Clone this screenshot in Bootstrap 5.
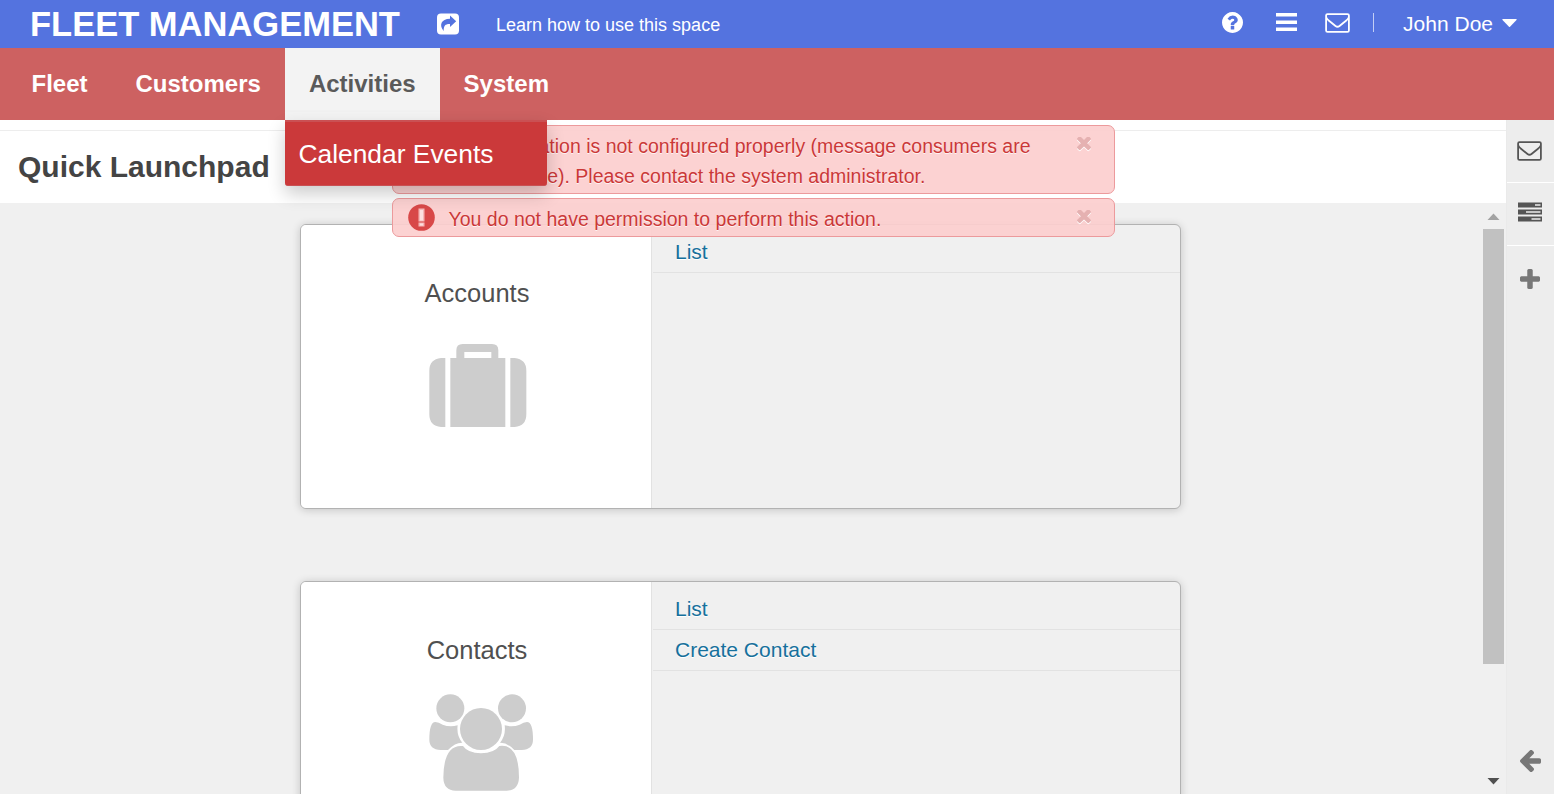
<!DOCTYPE html>
<html lang="en">
<head>
<meta charset="utf-8">
<meta name="viewport" content="width=device-width, initial-scale=1">
<title>Fleet Management</title>
<link rel="stylesheet" href="https://cdn.jsdelivr.net/npm/bootstrap@5.3.0/dist/css/bootstrap.min.css">
<style>
body{font-family:"Liberation Sans",Arial,sans-serif;background:#f0f0f0;color:#444}
svg{display:block;fill:currentColor}
.topbar{height:48px;background:#5473df;padding:0 37px 0 30px}
.brand{font-size:34.5px;line-height:48px;font-weight:700;width:407px}
.learn{font-size:18px;margin-left:37px;padding-top:2px}
.user{font-size:21px;margin-left:29px}
.sep{width:1px;height:19px;margin:-4px 0 0 23px;background:#c3cef5}
.mainmenu{height:72px;background:#cd6161;padding-left:8px}
.mainmenu .nav-link{font-size:24px;font-weight:700;line-height:72px;padding:0 24.5px 0 23.500px;color:#fff}
.mainmenu .nav-link.active{background:linear-gradient(#f3f3f3 62px,#efefef 63px,#f3f3f3 64px);color:#5a5a5a}
.submenu{left:0;top:72px;width:262px;height:66px;z-index:30;background:#cb393a;border-top:2px solid #ca5053;border-bottom:1px solid #c95053;border-radius:0 0 3px 3px;box-shadow:0 8px 18px rgba(0,0,0,.2);color:#fff;font-size:26.4px;line-height:64px;padding-left:13px}
.titlebar{height:83px;background:#fff;padding-top:10px}
.titlebar h1{border-top:1px solid #ededed;font-size:30px;font-weight:700;line-height:71px;padding-left:18px;margin:0;color:#444}
.board{padding:21px 0 0 300px}
.pad-card{width:881px;height:285px;border:1px solid #b2b2b2;border-radius:6px;background:#f0f0f0;box-shadow:0 1px 9px rgba(0,0,0,.19);margin-bottom:72px;flex:none}
.face{width:351px;background:#fff;border-right:1px solid #e2e2e2;color:#505050;font-size:25.5px;line-height:36px;padding:50px 0 0 2px}
.face svg{fill:#cdcdcd;margin:19px 0 0 7px}
.linklist{padding:7px 0 0 1px}
.linklist a{height:41px;line-height:40px;border-bottom:1px solid #e2e2e2;padding-left:22px;font-size:21px;color:#16709c;text-decoration:none;text-shadow:0 1px 0 #fff}
.track{width:24px;padding:10px 0 9px 1px}
.thumb{width:21px;height:435px;margin-top:9px;background:#c1c1c1}
.tools{width:48px;background:#ededed;color:#555;border-left:1px solid #eaeaea;padding-right:1px}
.tools>div{border-bottom:1px solid #fff;height:63px;margin-right:-1px;padding-right:2px}
.flashes{left:392px;top:125px;width:723px;z-index:20}
.flash{background:rgba(252,206,206,.92);border:1px solid #ec9a9c;border-radius:7px;color:#cb3838;font-size:19.5px;line-height:30px;text-shadow:0 1px 0 rgba(255,255,255,.75);margin-bottom:4px;padding:5px 20px 2px 55.5px;position:relative}
.flash .ico{position:absolute;left:15px;top:5px}
.flash .shut{position:absolute;right:23px;top:10.5px;color:#e5b1b1;filter:drop-shadow(0 1.5px 0 #fff)}
</style>
<script src="https://cdn.jsdelivr.net/npm/bootstrap@5.3.0/dist/js/bootstrap.bundle.min.js"></script>
</head>
<body class="vh-100 overflow-hidden d-flex flex-column position-relative">
<svg width="0" height="0" class="position-absolute">
<symbol id="mail" viewBox="0 0 25 20"><path fill="none" stroke="currentColor" stroke-width="1.800" stroke-linejoin="round" d="M2.500 1.200h20q1.400 0 1.400 1.400v14.800q0 1.400-1.400 1.400h-20q-1.400 0-1.400-1.400V2.600q0-1.400 1.400-1.400zM1.300 4.500Q2 6.200 4 7.800L10.500 13q2 1.600 4 0L21 7.800Q23 6.200 23.700 4.500"/></symbol>
<symbol id="times" viewBox="302 434 1188 1188"><path d="M1490 1322q0 40-28 68l-136 136q-28 28-68 28t-68-28l-294-294-294 294q-28 28-68 28t-68-28l-136-136q-28-28-28-68t28-68l294-294-294-294q-28-28-28-68t28-68l136-136q28-28 68-28t68 28l294 294 294-294q28-28 68-28t68 28l136 136q28 28 28 68t-28 68l-294 294 294 294q28 28 28 68z"/></symbol>
</svg>

<header class="topbar d-flex align-items-center text-white flex-shrink-0">
  <div class="brand text-nowrap">FLEET MANAGEMENT</div>
  <svg width="22" height="22" viewBox="0 0 22 22"><rect y=".5" width="22" height="21" rx="4"/><path fill="#5473df" d="M13 2.600 19.200 8.300 13 14V10.900C8.500 10.700 6.600 12.500 6.700 18 1.800 12.500 4 5.800 13 5.800z"/></svg>
  <div class="learn">Learn how to use this space</div>
  <svg class="ms-auto" style="margin-top:-3px" width="21" height="21" viewBox="128 128 1536 1536"><path d="M1024 1376v-192q0-14-9-23t-23-9h-192q-14 0-23 9t-9 23v192q0 14 9 23t23 9h192q14 0 23-9t9-23zm256-672q0-88-55.500-163t-138.500-116-170-41q-243 0-371 213-15 24 8 42l132 100q7 6 19 6 16 0 25-12 53-68 86-92 34-24 86-24 48 0 85.500 26t37.500 59q0 38-20 61t-68 45q-63 28-115.500 86.500t-52.500 125.500v36q0 14 9 23t23 9h192q14 0 23-9t9-23q0-19 21.500-49.500t54.500-49.500q32-18 49-28.500t46-35 44.500-48 28-60.500 12.500-81zm384 192q0 209-103 385.500t-279.500 279.500-385.500 103-385.500-103-279.500-279.500-103-385.500 103-385.500 279.500-279.500 385.500-103 385.500 103 279.500 279.500 103 385.500z"/></svg>
  <svg style="margin:-4px 28px 0 33px" width="21" height="18" viewBox="0 0 21 18"><path d="M0 0h21v3.500H0zM0 7.500h21V11H0zM0 14.500h21V18H0z"/></svg>
  <svg width="25" height="20" style="margin-top:-2px"><use href="#mail"/></svg>
  <div class="sep"></div>
  <div class="user">John Doe</div>
  <svg style="margin:-3px 0 0 9px" width="15" height="8" viewBox="0 0 15 8"><path d="M.8 0h13.400q.8.300.3 1L8 7.700q-.5.400-1 0L.5 1Q0 .3.800 0z"/></svg>
</header>

<ul class="mainmenu nav flex-nowrap flex-shrink-0">
  <li class="nav-item"><a class="nav-link" href="#">Fleet</a></li>
  <li class="nav-item"><a class="nav-link" href="#">Customers</a></li>
  <li class="nav-item position-relative"><a class="nav-link active" href="#">Activities</a>
    <div class="submenu position-absolute">Calendar Events</div></li>
  <li class="nav-item"><a class="nav-link" href="#">System</a></li>
</ul>

<div class="d-flex flex-grow-1 overflow-hidden">
  <div class="flex-grow-1 d-flex flex-column">
    <div class="titlebar flex-shrink-0"><h1>Quick Launchpad</h1></div>
    <div class="d-flex flex-grow-1 overflow-hidden">
      <main class="board flex-grow-1 d-flex flex-column overflow-hidden">
        <section class="pad-card d-flex overflow-hidden">
          <div class="face d-flex flex-column align-items-center">Accounts
            <svg width="160" height="110" viewBox="2 0 480 330"><path d="M135 84V291H122Q87 288 87 253V122Q87 88 122 84zM330 84H343Q378 88 378 122V253Q378 288 343 291H330zM150 84H168V61Q168 42 187 42H275Q294 42 294 61V84H315V291H150zM192 84H273V66H192z"/></svg></div>
          <div class="linklist flex-grow-1 d-flex flex-column"><a href="#">List</a></div>
        </section>
        <section class="pad-card d-flex overflow-hidden">
          <div class="face d-flex flex-column align-items-center">Contacts
            <svg style="margin-top:12px" width="160" height="114" viewBox="2 0 480 342"><circle cx="150" cy="85" r="42"/><circle cx="335" cy="85" r="42"/><circle cx="242" cy="147" r="63"/><path d="M105 126Q115 126 127 134 148 142 172 136 168 167 186 188 165 187 143 210H121Q87 208 87 179 87 126 105 126zM380 126Q370 126 358 134 337 142 313 136 317 167 299 188 320 187 342 210H364Q398 208 398 179 398 126 380 126zM188 198Q202 219 242 220 282 219 297 198 356 190 356 293 354 331 319 332H166Q130 331 129 293 130 192 188 198z"/></svg></div>
          <div class="linklist flex-grow-1 d-flex flex-column"><a href="#">List</a><a href="#">Create Contact</a></div>
        </section>
      </main>
      <div class="track d-flex flex-column">
        <svg class="ms-1" width="13" height="7" viewBox="0 0 13 7" style="fill:#a3a3a3"><path d="M.5 7 6.500.5 12.500 7z"/></svg>
        <div class="thumb"></div>
        <svg class="ms-1 mt-auto" width="13" height="7" viewBox="0 0 13 7" style="fill:#505050"><path d="M.5 0 6.500 6.500 12.500 0z"/></svg>
      </div>
    </div>
  </div>
  <aside class="tools d-flex flex-column flex-shrink-0">
    <div class="d-flex align-items-center justify-content-center"><svg width="25" height="20"><use href="#mail"/></svg></div>
    <div class="d-flex align-items-center justify-content-center pb-1"><svg width="24" height="20" viewBox="0 0 24 20"><path fill-rule="evenodd" d="M0 .5h24v5H0zM17 2.200v1.600h5.500V2.200zM0 7.500h24v5H0zM8 9.200v1.600h14.500V9.200zM0 14.500h24v5H0zM13.500 16.200v1.600h9V16.200z"/></svg></div>
    <svg class="mx-auto" style="margin-top:23px;fill:#777" width="20" height="20" viewBox="192 128 1408 1408"><path d="M1600 736v192q0 40-28 68t-68 28h-416v416q0 40-28 68t-68 28h-192q-40 0-68-28t-28-68v-416h-416q-40 0-68-28t-28-68v-192q0-40 28-68t68-28h416v-416q0-40 28-68t68-28h192q40 0 68 28t28 68v416h416q40 0 68 28t28 68z"/></svg>
    <svg class="mx-auto mt-auto" style="margin-bottom:22px;fill:#777" width="21" height="22" viewBox="192 210 1472 1500"><path d="M1664 896v128q0 53-32.500 90.500t-84.500 37.500h-704l293 294q38 36 38 90t-38 90l-75 76q-37 37-90 37-52 0-91-37l-651-652q-37-37-37-90 0-52 37-91l651-650q38-38 91-38 52 0 90 38l75 74q38 38 38 91t-38 91l-293 293h704q52 0 84.500 37.500t32.500 90.500z"/></svg>
  </aside>
</div>

<div class="flashes position-absolute">
  <div class="flash">The application is not configured properly (message consumers are<br>not available). Please contact the system administrator.
    <svg class="shut" width="14" height="14"><use href="#times"/></svg></div>
  <div class="flash">You do not have permission to perform this action.
    <svg class="ico" width="27" height="27" viewBox="0 0 27 27"><circle cx="13.500" cy="13.500" r="13.300" fill="#d84848"/><path fill="#f6b8b8" d="M10.500 4.500h6v13h-6zM10.500 18.500h6v4h-6z"/><path fill="#fde0e0" d="M12 6h3v10.500h-3zM12 19.500h3v2h-3z"/></svg>
    <svg class="shut" width="14" height="14"><use href="#times"/></svg></div>
</div>
</body>
</html>
